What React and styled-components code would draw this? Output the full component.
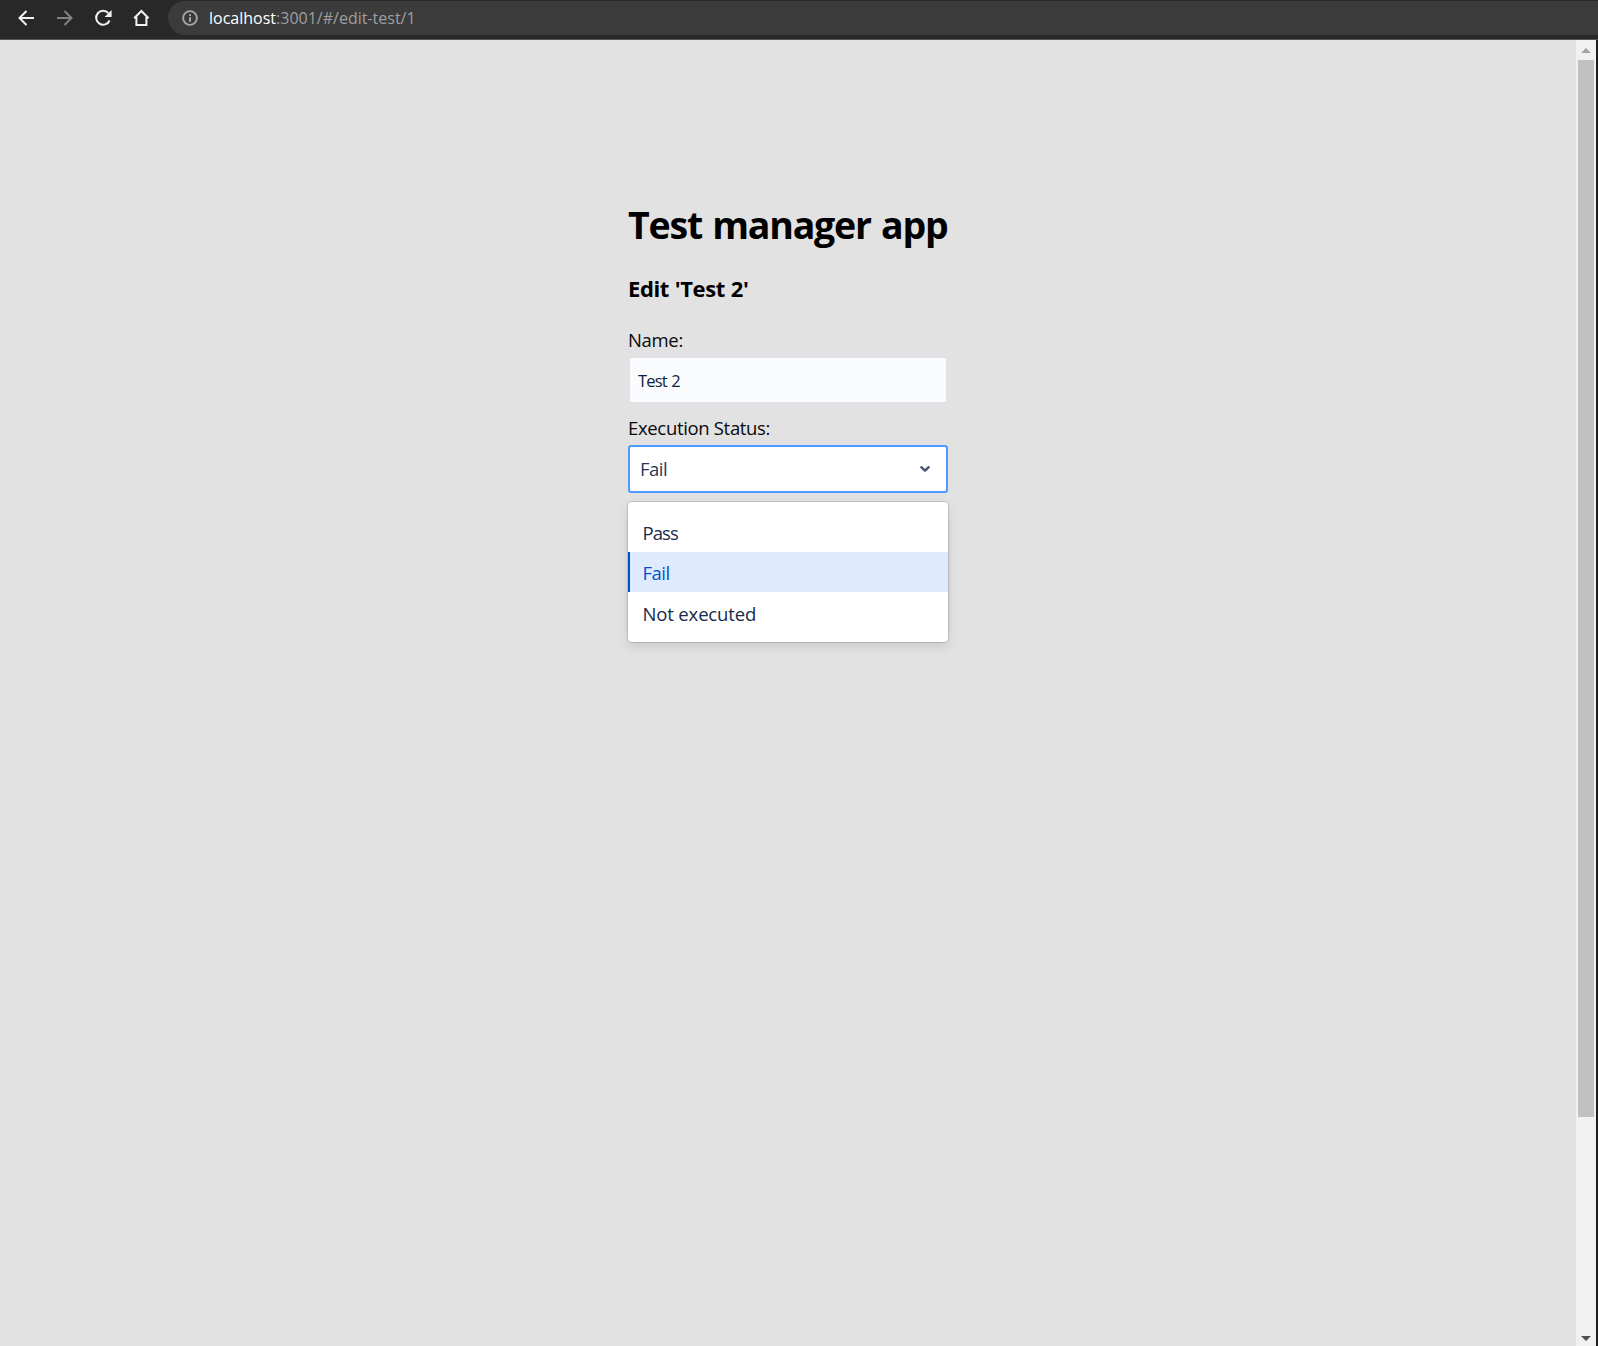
import React from "react";
import styled, { createGlobalStyle } from "styled-components";

const GlobalStyle = createGlobalStyle`
  * { box-sizing: border-box; }
  html, body { margin: 0; padding: 0; overflow: hidden; }
  body { font-family: "Open Sans", "Noto Sans", sans-serif; background: #e2e2e2; }
`;

const Window = styled.div`
  display: flex;
  flex-direction: column;
  width: 1598px;
  height: 1346px;
  overflow: hidden;
`;

const Toolbar = styled.header`
  display: flex;
  align-items: flex-start;
  flex: 0 0 40px;
  background: #282828;
  border-bottom: 1px solid #555555;
  padding-top: 1px;
`;

const NavButtons = styled.nav`
  display: flex;
  flex: 0 0 168px;
  height: 34px;
  padding-left: 7px;
`;

const NavButton = styled.button`
  display: grid;
  place-items: center;
  width: 38.4px;
  height: 34px;
  padding: 0;
  border: 0;
  background: none;
  color: ${(p) => (p.$dim ? "#838383" : "#f2f2f2")};
`;

const AddressBar = styled.div`
  display: flex;
  align-items: center;
  flex: 1;
  height: 34px;
  padding-left: 14px;
  gap: 11px;
  border-radius: 17px 0 0 17px;
  background: #3b3b3b;
  color: #a5a8ac;
`;

const Url = styled.span`
  font-size: 16px;
  line-height: 22px;
  white-space: nowrap;
  color: #9c9fa2;
`;

const Host = styled.span`
  color: #ffffff;
`;

const Viewport = styled.div`
  display: flex;
  flex: 1;
  min-height: 0;
`;

const Page = styled.main`
  display: flex;
  justify-content: center;
  align-items: flex-start;
  flex: 1;
  background: #e2e2e2;
  padding-top: 159px;
`;

const Form = styled.form`
  display: flex;
  flex-direction: column;
  width: 320px;
`;

const Title = styled.h1`
  margin: 0;
  font-size: 37.5px;
  line-height: 52px;
  font-weight: 700;
  letter-spacing: -1.2px;
  word-spacing: 1.6px;
  white-space: nowrap;
  color: #000;
`;

const Subtitle = styled.h2`
  margin: 22px 0 0;
  font-size: 22px;
  line-height: 30px;
  font-weight: 700;
  letter-spacing: -0.4px;
  word-spacing: 0.6px;
  white-space: nowrap;
  color: #000;
`;

const Label = styled.label`
  margin-top: ${(p) => p.$top};
  height: 25px;
  font-size: 18.5px;
  line-height: 25px;
  letter-spacing: -0.33px;
  color: #0a0a0a;
`;

const TextInput = styled.input`
  width: 320px;
  height: 48px;
  margin-top: 4px;
  padding: 0 8px;
  border: 2px solid #dfe1e6;
  border-radius: 3px;
  background: #fafbfc;
  font: 16.5px "Open Sans", "Noto Sans", sans-serif;
  letter-spacing: -0.85px;
  word-spacing: 1px;
  color: #091e42;
  outline: 0;
`;

const Select = styled.div`
  display: flex;
  align-items: center;
  justify-content: space-between;
  width: 320px;
  height: 48px;
  margin-top: 5px;
  padding: 0 15.5px 2px 10px;
  border: 2px solid #4c9aff;
  border-radius: 3px;
  background: #fff;
  color: #253858;
  font-size: 18.5px;
  letter-spacing: -0.5px;
`;

const Chevron = styled.svg`
  margin-top: 2px;
`;

const Menu = styled.div`
  width: 320px;
  margin-top: 9px;
  padding: 10px 0;
  border-radius: 4px;
  background: #fff;
  box-shadow: 0 0 0 1px rgba(0, 0, 0, 0.13), 0 4px 11px rgba(0, 0, 0, 0.12);
`;

const Option = styled.div`
  height: 40px;
  padding-left: 12.5px;
  border-left: 2px solid ${(p) => (p.$selected ? "#0052cc" : "transparent")};
  background: ${(p) => (p.$selected ? "#deebff" : "transparent")};
  color: ${(p) => (p.$selected ? "#0052cc" : "#172b4d")};
  font-size: 18.5px;
  line-height: 41px;
  letter-spacing: ${(p) => p.$spacing};

  &:last-child {
    line-height: 43px;
  }
`;

const Scrollbar = styled.div`
  display: flex;
  flex-direction: column;
  align-items: center;
  flex: 0 0 20px;
  background: #f1f1f1;
`;

const ScrollArrow = styled.div`
  display: flex;
  justify-content: center;
  align-items: ${(p) => (p.$down ? "flex-end" : "flex-start")};
  width: 20px;
  height: 20px;
  padding: ${(p) => (p.$down ? "0 0 5px" : "8px 0 0")};
  color: ${(p) => (p.$down ? "#505050" : "#a3a3a3")};
`;

const Thumb = styled.div`
  width: 16px;
  height: 1057px;
  margin-bottom: auto;
  background: #c1c1c1;
`;

const WindowEdge = styled.div`
  flex: 0 0 2px;
  background: #1b1c22;
`;

const Stroke = ({ size = 20, width = 2, children }) => (
  <svg width={size} height={size} viewBox="0 0 20 20" fill="none" stroke="currentColor" strokeWidth={width}>
    {children}
  </svg>
);

const options = [
  { name: "Pass", spacing: "-0.9px" },
  { name: "Fail", spacing: "-0.5px" },
  { name: "Not executed", spacing: "-0.15px" },
];

export default function App() {
  return (
    <>
      <GlobalStyle />
      <Window>
        <Toolbar>
          <NavButtons>
            <NavButton aria-label="Back">
              <Stroke><path d="M18 10H3.5M10.5 3l-7 7 7 7" /></Stroke>
            </NavButton>
            <NavButton aria-label="Forward" $dim>
              <Stroke><path d="M2 10h14.5M9.5 3l7 7-7 7" /></Stroke>
            </NavButton>
            <NavButton aria-label="Reload">
              <Stroke>
                <path d="M16.6 12.5A7 7 0 1 1 15.4 5.1" />
                <path d="M18.6 2v7h-7z" fill="currentColor" stroke="none" />
              </Stroke>
            </NavButton>
            <NavButton aria-label="Home">
              <Stroke><path d="M3.2 10.3L10.4 3l7.2 7.3M5.4 9v8h10V9" /></Stroke>
            </NavButton>
          </NavButtons>
          <AddressBar>
            <Stroke size={16} width={2.3}>
              <circle cx="10" cy="10" r="8.6" />
              <path d="M10 9v5.6M10 5.4v2.2" strokeWidth="2.5" />
            </Stroke>
            <Url><Host>localhost</Host>:3001/#/edit-test/1</Url>
          </AddressBar>
        </Toolbar>
        <Viewport>
          <Page>
            <Form>
              <Title>Test manager app</Title>
              <Subtitle>Edit 'Test 2'</Subtitle>
              <Label $top="24px">Name:</Label>
              <TextInput defaultValue="Test 2" />
              <Label $top="11px">Execution Status:</Label>
              <Select>
                Fail
                <Chevron width="12" height="8" viewBox="0 0 12 8" fill="none" stroke="#42526e" strokeWidth="2.4" strokeLinecap="round" strokeLinejoin="round">
                  <path d="M2.3 2.2L6 5.6l3.7-3.4" />
                </Chevron>
              </Select>
              <Menu>
                {options.map((o) => (
                  <Option key={o.name} $selected={o.name === "Fail"} $spacing={o.spacing}>{o.name}</Option>
                ))}
              </Menu>
            </Form>
          </Page>
          <Scrollbar>
            <ScrollArrow>
              <svg width="10" height="5" viewBox="0 0 10 5"><path d="M0 5L5 0l5 5z" fill="currentColor" /></svg>
            </ScrollArrow>
            <Thumb />
            <ScrollArrow $down>
              <svg width="10" height="5" viewBox="0 0 10 5"><path d="M0 0l5 5 5-5z" fill="currentColor" /></svg>
            </ScrollArrow>
          </Scrollbar>
          <WindowEdge />
        </Viewport>
      </Window>
    </>
  );
}
